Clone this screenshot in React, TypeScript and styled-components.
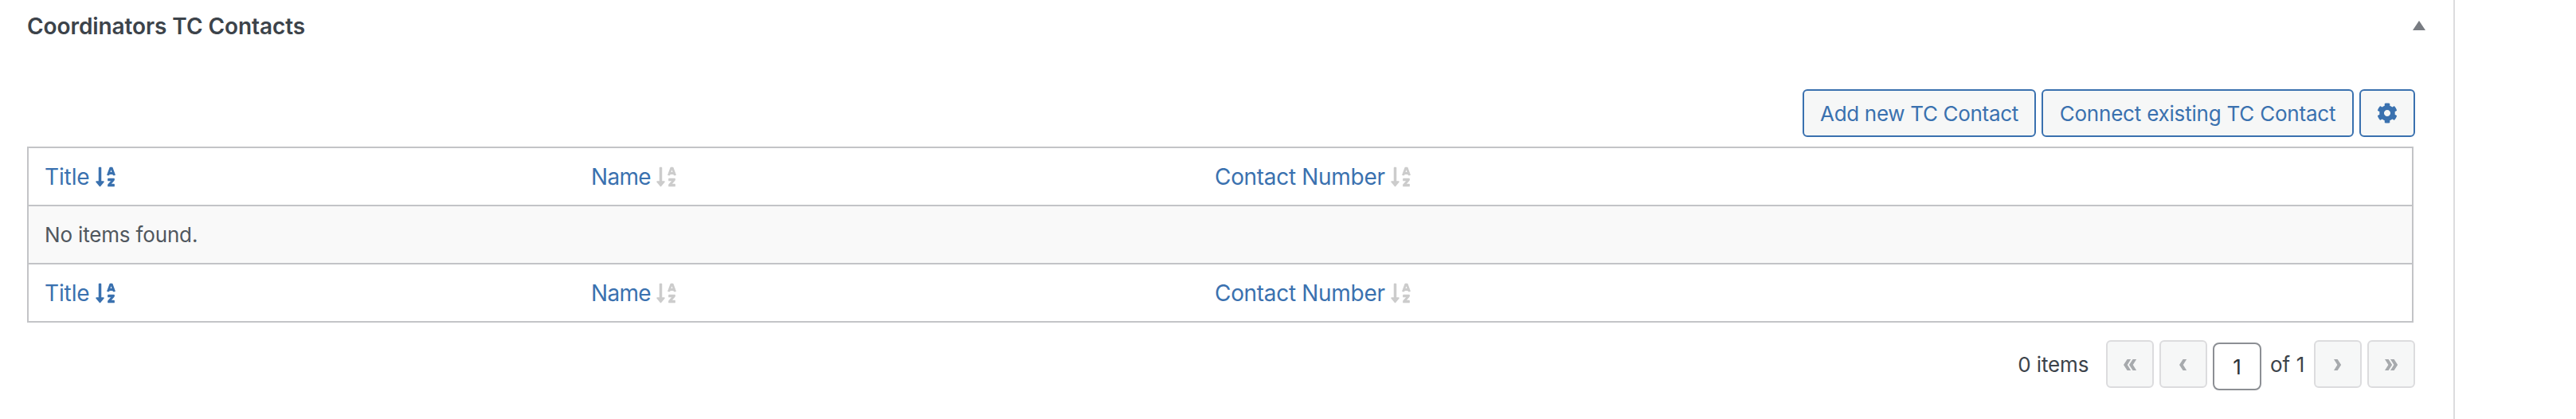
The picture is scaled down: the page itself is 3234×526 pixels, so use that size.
import React from 'react';
import styled, { createGlobalStyle } from 'styled-components';
import { FaSortAlphaDown, FaCog } from 'react-icons/fa';

const blue = '#3a71af';

const GlobalStyle = createGlobalStyle`
  *, *::before, *::after { box-sizing: border-box; }
  body { margin: 0; background: #fff; color: #3c434a; font-family: Inter, "Liberation Sans", sans-serif; }
`;

const Page = styled.div`
  display: flex;
  width: 3234px;
  height: 526px;
  overflow: hidden;
`;

const Panel = styled.section`
  display: flex;
  flex-direction: column;
  width: 3082px;
  padding: 0 48px 0 34px;
  border-right: 2px solid #dcdcde;
`;

const PanelHeader = styled.header`
  display: flex;
  justify-content: space-between;
  align-items: center;
  height: 66px;
  margin-right: -13px;
`;

const Heading = styled.h2`
  margin: 0;
  font-size: 28px;
  line-height: 40px;
  font-weight: 600;
  letter-spacing: -0.083px;
  white-space: nowrap;
`;

const Toggle = styled.svg`
  width: 16px;
  height: 12px;
  margin-bottom: 2px;
  fill: #787c82;
`;

const Toolbar = styled.div`
  display: flex;
  justify-content: flex-end;
  gap: 7px;
  margin-top: 46px;
`;

const Button = styled.button<{ $width: number; $spacing?: number }>`
  display: flex;
  align-items: center;
  justify-content: center;
  width: ${p => p.$width}px;
  height: 60px;
  padding: 2px 0 0;
  border: 2px solid ${blue};
  border-radius: 6px;
  background: #f6f7f7;
  color: ${blue};
  font: 400 26px/40px Inter, "Liberation Sans", sans-serif;
  letter-spacing: ${p => p.$spacing ?? 0}px;
  white-space: nowrap;

  svg { margin-bottom: 2px; }
`;

const Table = styled.div`
  display: flex;
  flex-direction: column;
  width: 2996px;
  margin-top: 12px;
  border: 2px solid #c3c4c7;
`;

const Row = styled.div<{ $striped?: boolean }>`
  display: grid;
  grid-template-columns: 686px 783px 1fr;
  align-items: center;
  height: 71px;
  padding-left: 20px;
  background: ${p => (p.$striped ? '#f9f9f9' : '#fff')};

  & + & { height: 73px; border-top: 2px solid #c3c4c7; }
`;

const SortLink = styled.a<{ $spacing: number }>`
  display: flex;
  align-items: center;
  gap: 7px;
  color: ${blue};
  font-size: 28px;
  line-height: 40px;
  letter-spacing: ${p => p.$spacing}px;
`;

const SortIcon = styled(FaSortAlphaDown)<{ $active: boolean }>`
  width: 25px;
  height: 28px;
  color: ${p => (p.$active ? blue : '#ccc')};
`;

const Empty = styled.span`
  color: #50575e;
  font-size: 26px;
  line-height: 40px;
  letter-spacing: -0.16px;
  white-space: nowrap;
`;

const Pagination = styled.nav`
  display: flex;
  justify-content: flex-end;
  height: 64px;
  margin-top: 22px;
  gap: 7px;
`;

const Label = styled.span<{ $left?: number; $right: number; $spacing: number }>`
  margin-left: ${p => p.$left ?? 0}px;
  margin-right: ${p => p.$right}px;
  font-size: 26px;
  line-height: 62px;
  letter-spacing: ${p => p.$spacing}px;
  white-space: nowrap;
`;

const PageButton = styled.button`
  display: flex;
  align-items: center;
  justify-content: center;
  width: 60px;
  height: 60px;
  padding: 2px 0 0;
  border: 2px solid #dcdcde;
  border-radius: 6px;
  background: #f6f7f7;
`;

const Chevron = styled.svg`
  height: 14px;
  fill: #a7aaad;
`;

const PageInput = styled.input`
  width: 61px;
  height: 60px;
  margin-top: 3px;
  padding: 0;
  border: 2px solid #8c8f94;
  border-radius: 8px;
  background: #fff;
  color: #2c3338;
  font: 400 26px/40px Inter, "Liberation Sans", sans-serif;
  text-align: center;
`;

const columns = [
  { label: 'Title', active: true, spacing: -0.124 },
  { label: 'Name', active: false, spacing: -0.68 },
  { label: 'Contact Number', active: false, spacing: -0.314 },
];

const ColumnRow = () => (
  <Row>
    {columns.map(c => (
      <SortLink key={c.label} $spacing={c.spacing}>
        <span>{c.label}</span>
        <SortIcon $active={c.active} />
      </SortLink>
    ))}
  </Row>
);

const CHEVRON = 'M4.6 0H9.2L4.8 7L9.2 14H4.6L0 7Z';

const Arrow = ({ double, flip }: { double?: boolean; flip?: boolean }) => {
  const width = double ? 16.2 : 9.2;
  return (
    <PageButton>
      <Chevron width={width} viewBox={`0 0 ${width} 14`}>
        <g transform={flip ? `translate(${width} 0) scale(-1 1)` : undefined}>
          <path d={CHEVRON} />
          {double && <path d={CHEVRON} transform="translate(7 0)" />}
        </g>
      </Chevron>
    </PageButton>
  );
};

export default function App() {
  return (
    <>
      <GlobalStyle />
      <Page>
        <Panel>
          <PanelHeader>
            <Heading>Coordinators TC Contacts</Heading>
            <Toggle viewBox="0 0 16 12"><path d="M8 0L16 12H0Z" /></Toggle>
          </PanelHeader>
          <Toolbar>
            <Button $width={293} $spacing={-0.316}>Add new TC Contact</Button>
            <Button $width={392} $spacing={-0.207}>Connect existing TC Contact</Button>
            <Button $width={70}><FaCog size={26} /></Button>
          </Toolbar>
          <Table>
            <ColumnRow />
            <Row $striped><Empty>No items found.</Empty></Row>
            <ColumnRow />
          </Table>
          <Pagination>
            <Label $right={14.7} $spacing={-0.133}>0 items</Label>
            <Arrow double />
            <Arrow />
            <PageInput defaultValue="1" />
            <Label $left={4} $right={4.7} $spacing={0.058}>of 1</Label>
            <Arrow flip />
            <Arrow double flip />
          </Pagination>
        </Panel>
      </Page>
    </>
  );
}
